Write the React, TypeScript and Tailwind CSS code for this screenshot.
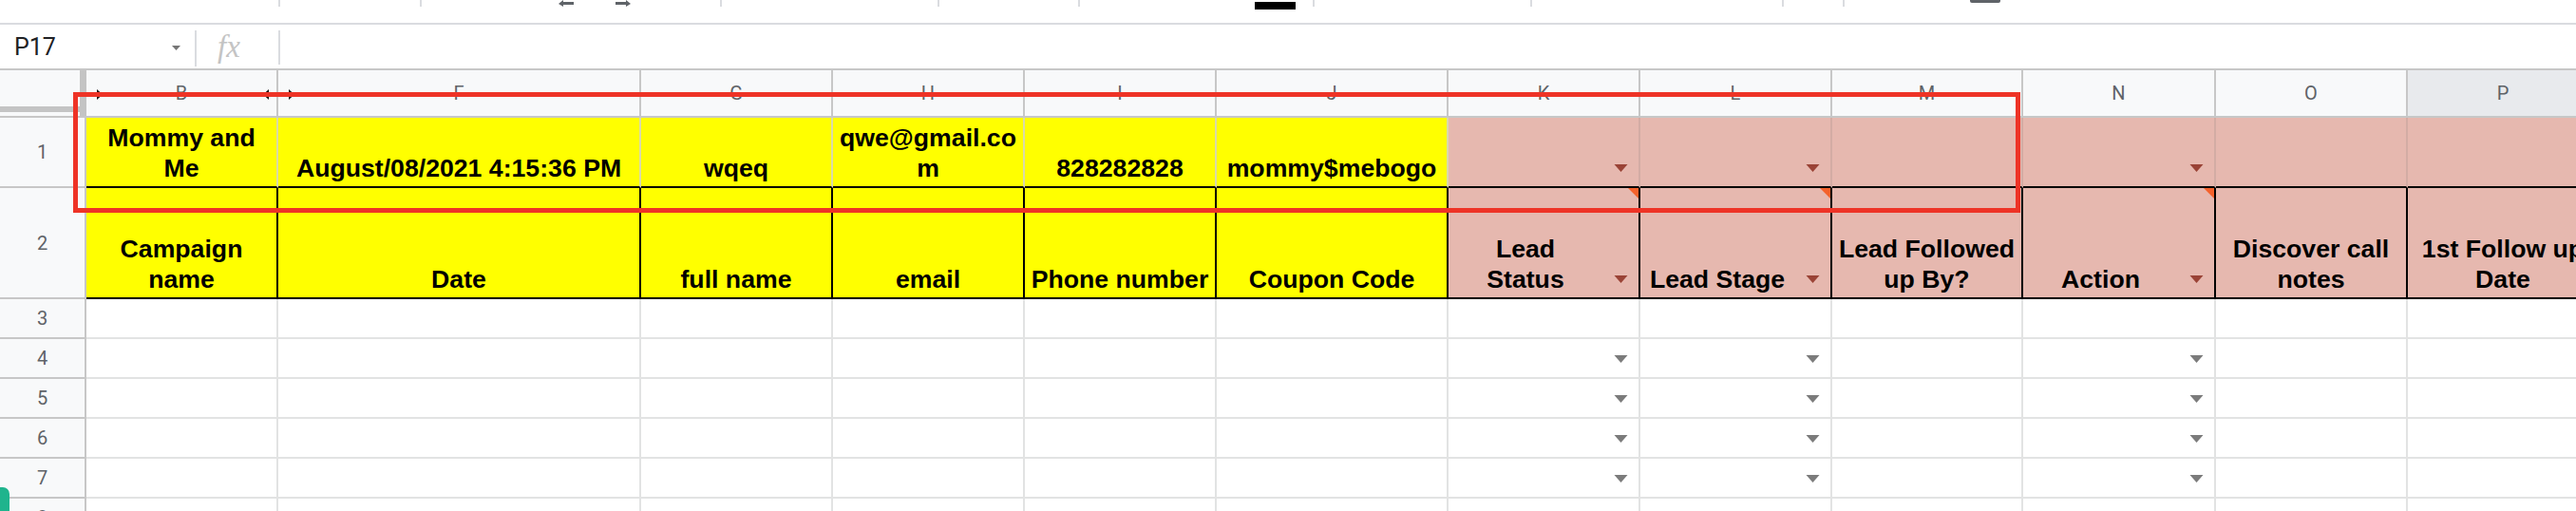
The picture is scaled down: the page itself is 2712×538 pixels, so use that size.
import React from 'react';

type Col = { l: string; r1: string; r2: string; pink: boolean; dd: boolean; sel?: boolean };

const COLS: Col[] = [
  { l: 'B', r1: 'Mommy and Me', r2: 'Campaign name', pink: false, dd: false },
  { l: 'F', r1: 'August/08/2021 4:15:36 PM', r2: 'Date', pink: false, dd: false },
  { l: 'G', r1: 'wqeq', r2: 'full name', pink: false, dd: false },
  { l: 'H', r1: 'qwe@gmail.com', r2: 'email', pink: false, dd: false },
  { l: 'I', r1: '828282828', r2: 'Phone number', pink: false, dd: false },
  { l: 'J', r1: 'mommy$mebogo', r2: 'Coupon Code', pink: false, dd: false },
  { l: 'K', r1: '', r2: 'Lead Status', pink: true, dd: true },
  { l: 'L', r1: '', r2: 'Lead Stage', pink: true, dd: true },
  { l: 'M', r1: '', r2: 'Lead Followed up By?', pink: true, dd: false },
  { l: 'N', r1: '', r2: 'Action', pink: true, dd: true },
  { l: 'O', r1: '', r2: 'Discover call notes', pink: true, dd: false },
  { l: 'P', r1: '', r2: '1st Follow up Date', pink: true, dd: false, sel: true },
];

function Arrow({ color }: { color: string }) {
  return (
    <svg className="absolute right-[11px] bottom-[15px]" width="15" height="8" viewBox="0 0 15 8">
      <path d="M0.5 0 H14.5 L7.5 8 Z" fill={color} />
    </svg>
  );
}

function Note() {
  return (
    <svg className="absolute top-0 right-0" width="11" height="11" viewBox="0 0 11 11">
      <path d="M0 0 H11 V11 Z" fill="#f4622c" />
    </svg>
  );
}

function TriRight({ cls }: { cls: string }) {
  return (
    <svg className={cls} width="6" height="11" viewBox="0 0 6 11">
      <path d="M0 0 L6 5.5 L0 11 Z" fill="#111" />
    </svg>
  );
}

function TriLeft({ cls }: { cls: string }) {
  return (
    <svg className={cls} width="6" height="11" viewBox="0 0 6 11">
      <path d="M6 0 L0 5.5 L6 11 Z" fill="#111" />
    </svg>
  );
}

function Sep() {
  return <div className="w-[2px] h-[7px] bg-[#dadce0]" />;
}

export default function App() {
  const cellFont = "font-['Liberation_Sans',Arial,sans-serif] font-bold text-[26.67px] leading-[32px] text-black";
  return (
    <div className="relative w-[2712px] h-[538px] overflow-hidden bg-white">
      {/* toolbar (cut off) */}
      <div className="flex items-start h-[26px] border-b-2 border-[#dadce0]">
        <div className="ml-[293px]"><Sep /></div>
        <div className="ml-[147px]"><Sep /></div>
        <svg className="ml-[144px]" width="16" height="7" viewBox="0 0 16 7">
          <path d="M0 4 L5 0 V2 H16 V5 H5 V7 Z" fill="#5f6368" />
        </svg>
        <svg className="ml-[44px]" width="16" height="7" viewBox="0 0 16 7">
          <path d="M16 4 L11 0 V2 H0 V5 H11 V7 Z" fill="#5f6368" />
        </svg>
        <div className="ml-[94px]"><Sep /></div>
        <div className="ml-[227px]"><Sep /></div>
        <div className="ml-[146px]"><Sep /></div>
        <div className="ml-[184px] mt-[2px] w-[43px] h-[8px] bg-black" />
        <div className="ml-[18px]"><Sep /></div>
        <div className="ml-[227px]"><Sep /></div>
        <div className="ml-[263px]"><Sep /></div>
        <div className="ml-[62px]"><Sep /></div>
        <div className="ml-[132px] w-[32px] h-[3px] rounded-b-[2px] bg-[#5f6368]" />
      </div>

      {/* formula bar */}
      <div className="flex h-[48px] border-b-2 border-[#c7c7c7]">
        <div className="w-[205px] flex items-center justify-between pl-[15px] pr-[15px] pt-[2px]">
          <span className="font-['Roboto',sans-serif] text-[25px] text-[#202124]">P17</span>
          <svg width="9" height="5" viewBox="0 0 9 5">
            <path d="M0 0 H9 L4.5 5 Z" fill="#757575" />
          </svg>
        </div>
        <div className="self-start mt-[6px] w-[2px] h-[38px] bg-[#dadce0]" />
        <div className="w-[86px] flex items-center pl-[22px]">
          <span className="font-['Liberation_Serif',serif] italic text-[33px] leading-none text-[#c4c4c4]">fx</span>
        </div>
        <div className="self-start mt-[6px] w-[2px] h-[36px] bg-[#dadce0]" />
      </div>

      {/* grid */}
      <div className="grid grid-cols-[91px_202px_382px_202px_202px_202px_244px_202px_202px_201px_203px_202px_202px] grid-rows-[50px_74px_117px_42px_42px_42px_42px_42px_42px]">
        {/* header row */}
        <div className="relative bg-[#f8f9fa] border-b-2 border-[#c7c7c7]">
          <div className="absolute right-0 top-0 w-[7px] h-[48px] bg-[#c4c4c4]" />
          <div className="absolute left-0 top-[38px] w-[84px] h-[6px] bg-[#c4c4c4]" />
        </div>
        {COLS.map((c) => (
          <div
            key={'h' + c.l}
            className={
              (c.sel ? 'bg-[#e8eaed] ' : 'bg-[#f8f9fa] ') +
              "relative flex items-center justify-center border-r-2 border-b-2 border-[#c7c7c7] font-['Roboto',sans-serif] text-[20px] text-[#5f6368]"
            }
          >
            {c.l === 'B' && <TriRight cls="absolute left-[11px] top-[20px]" />}
            {c.l === 'B' && <TriLeft cls="absolute right-[8px] top-[20px]" />}
            {c.l === 'F' && <TriRight cls="absolute left-[11px] top-[20px]" />}
            {c.l}
          </div>
        ))}

        {/* row 1 */}
        <div className="flex items-center justify-center bg-[#f8f9fa] border-r-2 border-b-2 border-[#c7c7c7] font-['Roboto',sans-serif] text-[20px] text-[#5f6368]">1</div>
        {COLS.map((c) => (
          <div
            key={'r1' + c.l}
            className={
              (c.pink ? 'bg-[#e6b8af] border-r-[#d3aca4] ' : 'bg-[#ffff00] border-r-[#dadaa8] ') +
              (c.dd ? 'pl-[8px] pr-[46px] ' : 'pl-[4px] pr-[4px] ') +
              'relative flex items-end justify-center text-center break-words pb-[3px] border-r-2 border-b-2 border-b-black ' +
              cellFont
            }
          >
            <span className="min-w-0 max-w-full">{c.r1}</span>
            {c.dd && <Arrow color="#9a4336" />}
          </div>
        ))}

        {/* row 2 */}
        <div className="flex items-center justify-center bg-[#f8f9fa] border-r-2 border-b-2 border-[#c7c7c7] font-['Roboto',sans-serif] text-[20px] text-[#5f6368]">2</div>
        {COLS.map((c) => (
          <div
            key={'r2' + c.l}
            className={
              (c.pink ? 'bg-[#e6b8af] ' : 'bg-[#ffff00] ') +
              (c.dd ? 'pl-[8px] pr-[46px] ' : 'pl-[4px] pr-[4px] ') +
              'relative flex items-end justify-center text-center break-words pb-[3px] border-r-2 border-b-2 border-black ' +
              cellFont
            }
          >
            <span className="min-w-0 max-w-full">{c.r2}</span>
            {c.dd && <Arrow color="#9a4336" />}
            {c.dd && <Note />}
          </div>
        ))}

        {/* rows 3-8 */}
        {[3, 4, 5, 6, 7, 8].map((r) => (
          <React.Fragment key={'row' + r}>
            <div className="flex items-center justify-center bg-[#f8f9fa] border-r-2 border-b-2 border-[#c7c7c7] font-['Roboto',sans-serif] text-[20px] text-[#5f6368]">
              {r}
            </div>
            {COLS.map((c) => (
              <div key={'c' + r + c.l} className="relative bg-white border-r-2 border-b-2 border-[#e2e3e3]">
                {c.dd && r >= 4 && <Arrow color="#7b7b7b" />}
              </div>
            ))}
          </React.Fragment>
        ))}
      </div>

      {/* annotation rectangle */}
      <div className="absolute left-[77px] top-[97px] w-[2050px] h-[127px] border-[5px] border-[#ee3326] pointer-events-none" />

      {/* floating side button (cut off) */}
      <div className="absolute left-0 top-[513px] w-[10px] h-[30px] rounded-tr-[7px] bg-[#1fb48d]" />
    </div>
  );
}
